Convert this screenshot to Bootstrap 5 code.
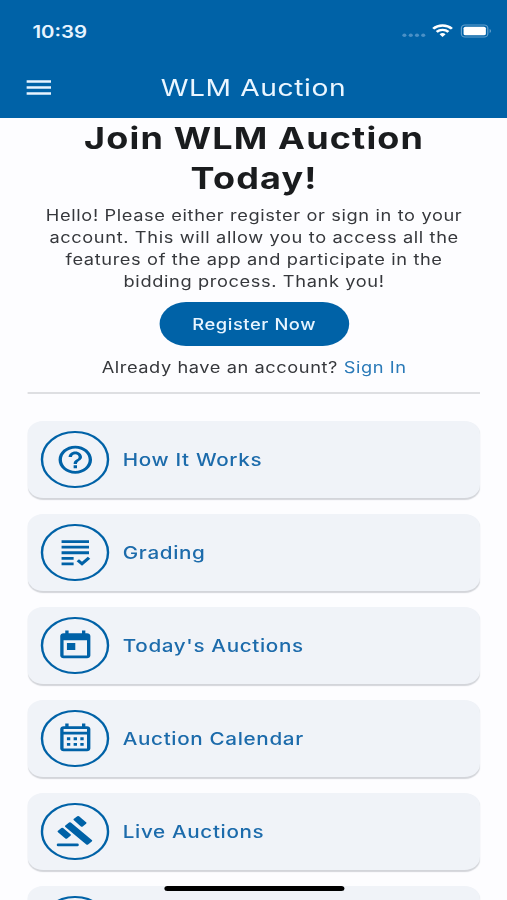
<!DOCTYPE html>
<html lang="en">
<head>
<meta charset="utf-8">
<meta name="viewport" content="width=device-width, initial-scale=1">
<title>WLM Auction</title>
<link rel="stylesheet" href="https://cdn.jsdelivr.net/npm/bootstrap@5.3.0/dist/css/bootstrap.min.css">
<style>
  :root { --brand: #0062a7; --brand-text: #1c6bab; }
  html, body { height: 900px; overflow: hidden; background: #fdfdff; }
  body { font-family: Inter, "Liberation Sans", sans-serif; color: #1a1c1e; }
  /* the whole screen is laid out narrow and widened by a fifth */
  .screen { width: 422.5px; height: 900px; overflow: hidden; transform: scaleX(1.2); transform-origin: 0 0; }
  .app-top { height: 118px; background: var(--brand); color: #fff; }
  .status-row { height: 60px; padding: 2px 12.5px 0 27px; }
  .clock { font-size: 17px; font-weight: 600; letter-spacing: 0; color: #e8f4ff; padding-top: 3px; }
  .title-row { height: 56px; padding: 0 22px; }
  .title-row .side { width: 21px; }
  .app-title { font-size: 23.5px; letter-spacing: .5px; line-height: 28px; color: #eaf6ff; }
  .intro { padding-left: 1px; }
  .headline { font-size: 30px; line-height: 40px; font-weight: 700; letter-spacing: .97px; }
  .copy { font-size: 15.2px; line-height: 22px; letter-spacing: .52px; color: #36383c; white-space: nowrap; }
  .pitch { margin-top: 7px; }
  .login { margin-top: 11px; letter-spacing: .48px; }
  .register { --bs-btn-bg: var(--brand); --bs-btn-color: #e8f5ff; --bs-btn-border-width: 0; width: 158px; height: 44px; margin-top: 9px; padding: 2px 0 0; font-size: 15.3px; font-weight: 500; letter-spacing: .46px; display: block; }
  .signin { color: #2a7ab8; }
  .divider { margin: 13px 22.5px 0 23.3px; border-top: 2px solid #dedfe2; opacity: 1; }
  .menu { padding: 26.5px 22.8px 0 23.3px; gap: 15.5px; }
  .tile { height: 77.5px; flex: none; border-radius: 13px; background: #f0f3f8; box-shadow: 0 1.5px 1px -.4px #d3d5da; padding: 0 11px; gap: 11.5px; color: var(--brand-text); font-size: 17.2px; font-weight: 500; letter-spacing: .55px; }
  .tile-label { padding-top: 1px; }
  .ring { width: 56.5px; height: 56.5px; border: 2px solid var(--brand); color: var(--brand); }
  .ring svg { width: 33.5px; height: 33.5px; fill: currentColor; }
  .home-bar { left: 136.5px; bottom: 9px; width: 150.5px; height: 5.5px; background: #000; }
</style>
</head>
<body>
<div class="screen position-relative">
  <header class="app-top">
    <div class="status-row d-flex align-items-center justify-content-between">
      <span class="clock">10:39</span>
      <svg width="76" height="20" viewBox="0 0 76 20">
        <g fill="#4a90c6"><circle cx="3" cy="14.300" r="1.700"/><circle cx="8.300" cy="14.300" r="1.700"/><circle cx="13.500" cy="14.300" r="1.700"/><circle cx="18.700" cy="14.300" r="1.700"/></g>
        <g fill="none" stroke="#fff" stroke-width="2.300"><path d="M27 7.800a10.900 10.900 0 0 1 15.600 0"/><path d="M29.900 10.900a6.900 6.900 0 0 1 9.800 0"/></g>
        <path fill="#fff" d="M34.800 15.900l-2.500-2.600a3.600 3.600 0 0 1 5 0z"/>
        <rect x="50.500" y="4" width="22" height="12" rx="3" fill="none" stroke="#629fcd"/>
        <rect x="52.300" y="5.700" width="18.600" height="8.600" rx="1.600" fill="#fff"/>
        <path fill="#629fcd" d="M74 8c1.600.6 1.600 3.400 0 4z"/>
      </svg>
    </div>
    <div class="title-row d-flex align-items-center justify-content-between">
      <span class="side d-flex"><svg width="21" height="16" viewBox="0 0 21 16" stroke="#e8f4ff" stroke-width="2.500"><path d="M0 1.500h20.500M0 7.500h20.500M0 13.500h20.500"/></svg></span>
      <span class="app-title">WLM Auction</span>
      <span class="side"></span>
    </div>
  </header>

  <main>
    <section class="intro text-center">
      <h1 class="headline mb-0">Join WLM Auction<br>Today!</h1>
      <p class="copy pitch mb-0">Hello! Please either register or sign in to your<br>account. This will allow you to access all the<br>features of the app and participate in the<br>bidding process. Thank you!</p>
      <button class="btn btn-primary rounded-pill register mx-auto" type="button">Register Now</button>
      <p class="copy login mb-0">Already have an account? <a class="signin text-decoration-none" href="#">Sign In</a></p>
    </section>
    <hr class="divider mb-0">
    <nav class="menu d-flex flex-column">
      <a class="tile d-flex align-items-center text-decoration-none" href="#">
        <span class="ring rounded-circle d-flex align-items-center justify-content-center"><svg viewBox="0 0 24 24"><path d="M11 18h2v-2h-2v2zm1-16C6.480 2 2 6.480 2 12s4.480 10 10 10 10-4.480 10-10S17.520 2 12 2zm0 18c-4.410 0-8-3.590-8-8s3.590-8 8-8 8 3.590 8 8-3.590 8-8 8zm0-14c-2.210 0-4 1.790-4 4h2c0-1.100.9-2 2-2s2 .9 2 2c0 2-3 1.750-3 5h2c0-2.250 3-2.500 3-5 0-2.210-1.790-4-4-4z"/></svg></span>
        <span class="tile-label">How It Works</span>
      </a>
      <a class="tile d-flex align-items-center text-decoration-none" href="#">
        <span class="ring rounded-circle d-flex align-items-center justify-content-center"><svg viewBox="0 0 24 24"><path d="M3.800 3h16.400v2H3.800zM3.800 7h16.400v2H3.800zM3.800 11h16.400v2H3.800zM3.800 15h7.200v2H3.800zM3.800 19h7.200v2H3.800z"/><path fill="none" stroke="currentColor" stroke-width="2" d="M13.500 17.400l2.500 2.500 4.200-4.300"/></svg></span>
        <span class="tile-label">Grading</span>
      </a>
      <a class="tile d-flex align-items-center text-decoration-none" href="#">
        <span class="ring rounded-circle d-flex align-items-center justify-content-center"><svg viewBox="0 0 24 24"><path d="M19 3h-1V1h-2v2H8V1H6v2H5c-1.110 0-1.990.9-1.990 2L3 19c0 1.100.89 2 2 2h14c1.100 0 2-.9 2-2V5c0-1.100-.9-2-2-2zm0 16H5V8h14v11zM7 10h5v5H7z"/></svg></span>
        <span class="tile-label">Today's Auctions</span>
      </a>
      <a class="tile d-flex align-items-center text-decoration-none" href="#">
        <span class="ring rounded-circle d-flex align-items-center justify-content-center"><svg viewBox="0 0 24 24"><path d="M19 3h-1V1h-2v2H8V1H6v2H5c-1.110 0-2 .9-2 2v14c0 1.100.89 2 2 2h14c1.100 0 2-.9 2-2V5c0-1.100-.9-2-2-2zm0 16H5V9h14v10zm0-12H5V5h14v2zM7 11h2v2H7zm4 0h2v2h-2zm4 0h2v2h-2zM7 15h2v2H7zm4 0h2v2h-2zm4 0h2v2h-2z"/></svg></span>
        <span class="tile-label">Auction Calendar</span>
      </a>
      <a class="tile d-flex align-items-center text-decoration-none" href="#">
        <span class="ring rounded-circle d-flex align-items-center justify-content-center"><svg viewBox="0 0 24 24" stroke="currentColor" stroke-width="1.500" stroke-linejoin="round"><path d="M1.700 21.100h11.600v.6H1.700zM6.600 8.100l2.200-2.200 12.500 12.500-2.200 2.200zM11.700 3.300l2-1.800 4.200 4.200-2 2zM2.200 11.900l2-2 4.400 4.400-2 2z"/></svg></span>
        <span class="tile-label">Live Auctions</span>
      </a>
      <a class="tile d-flex align-items-center text-decoration-none" href="#" aria-label="More">
        <span class="ring rounded-circle"></span>
      </a>
    </nav>
  </main>
  <div class="home-bar position-absolute rounded-pill"></div>
</div>
<script src="https://cdn.jsdelivr.net/npm/bootstrap@5.3.0/dist/js/bootstrap.bundle.min.js"></script>
</body>
</html>
